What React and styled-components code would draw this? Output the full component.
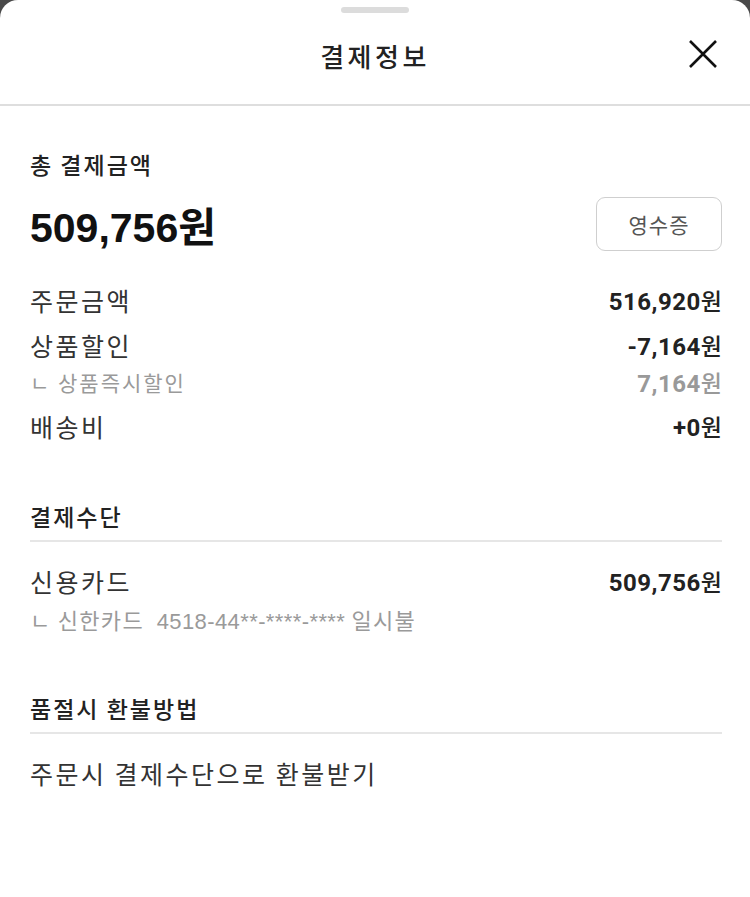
import React from "react";
import styled, { createGlobalStyle } from "styled-components";

const GlobalStyle = createGlobalStyle`
  html, body {
    margin: 0;
    padding: 0;
    background: #4a4a4a;
    font-family: "Noto Sans CJK KR", "Noto Sans", sans-serif;
  }
`;

const Sheet = styled.div`
  width: 750px;
  min-height: 897px;
  background: #fff;
  border-radius: 18px 18px 0 0;
  box-sizing: border-box;
`;

const Handle = styled.div`
  display: flex;
  justify-content: center;
  padding-top: 7px;

  &::before {
    content: "";
    width: 68px;
    height: 6px;
    border-radius: 3px;
    background: #dcdcdc;
  }
`;

const Header = styled.header`
  position: relative;
  height: 93px;
  padding-bottom: 6px;
  box-sizing: border-box;
  display: flex;
  align-items: center;
  justify-content: center;
  border-bottom: 2px solid #dedede;
`;

const Title = styled.h1`
  margin: 0;
  font-size: 26px;
  font-weight: 500;
  color: #222;
  letter-spacing: 3.5px;
`;

const CloseButton = styled.button`
  position: absolute;
  right: 31px;
  top: 25px;
  width: 32px;
  height: 32px;
  padding: 0;
  border: 0;
  background: none;
  display: flex;
  align-items: center;
  justify-content: center;
`;

const Body = styled.main`
  padding: 43px 28px 0 30px;
`;

const Caption = styled.div`
  font-size: 23px;
  font-weight: 500;
  color: #222;
  line-height: 30px;
  letter-spacing: 2px;
`;

const TotalRow = styled.div`
  display: flex;
  align-items: center;
  justify-content: space-between;
  margin-top: 15px;
`;

const Total = styled.div`
  font-family: "Liberation Sans", "Noto Sans CJK KR", sans-serif;
  font-size: 41px;
  font-weight: 700;
  color: #111;
`;

const ReceiptButton = styled.button`
  width: 126px;
  height: 54px;
  border: 1.5px solid #cfcfcf;
  border-radius: 9px;
  background: #fff;
  font-family: "Noto Sans CJK KR", sans-serif;
  font-size: 21px;
  color: #555;
  letter-spacing: 1px;
`;

const Rows = styled.div`
  margin-top: 23px;
`;

const Row = styled.div`
  display: flex;
  justify-content: space-between;
  align-items: center;
  height: ${(p) => (p.$sub ? 36 : 45)}px;
  margin: ${(p) => (p.$sub ? "-3px 0 3px" : "0")};
  color: ${(p) => (p.$sub ? "#9a9a9a" : "#333")};
`;

const Label = styled.span`
  font-size: ${(p) => (p.$sub ? 21 : 25)}px;
  letter-spacing: ${(p) => (p.$sub ? 2 : 2.5)}px;
`;

const Value = styled.span`
  font-family: "Roboto", "Noto Sans CJK KR", sans-serif;
  font-size: 24px;
  font-weight: 700;
  letter-spacing: 0.5px;
  color: ${(p) => (p.$sub ? "#999" : "#222")};

  small {
    font-family: "Noto Sans CJK KR", sans-serif;
    font-size: 23px;
    font-weight: 500;
    letter-spacing: 0;
  }
`;

const Section = styled.section`
  margin-top: ${(p) => p.$gap}px;
`;

const SectionTitle = styled.h2`
  margin: 0;
  font-size: 23px;
  font-weight: 500;
  color: #222;
  line-height: 30px;
  letter-spacing: 2px;
  padding-bottom: 9px;
  border-bottom: 2px solid #e6e6e6;
`;

const SectionBody = styled.div`
  padding-top: ${(p) => p.$pad}px;
`;

const SubNote = styled.div`
  font-size: 22px;
  color: #9a9a9a;
  letter-spacing: 1.3px;

  span {
    font-family: "Liberation Sans", sans-serif;
    letter-spacing: 0.4px;
  }
`;

const Plain = styled.div`
  font-size: 25px;
  color: #333;
  letter-spacing: 2.5px;
`;

const Won = ({ children, sub }) => (
  <Value $sub={sub}>
    {children}
    <small>원</small>
  </Value>
);

export default function App() {
  return (
    <>
      <GlobalStyle />
      <Sheet>
        <Handle />
        <Header>
          <Title>결제정보</Title>
          <CloseButton aria-label="닫기">
            <svg width="32" height="32" viewBox="0 0 32 32">
              <path d="M3 3 L29 29 M29 3 L3 29" stroke="#111" strokeWidth="2.6" fill="none" />
            </svg>
          </CloseButton>
        </Header>

        <Body>
          <Caption>총 결제금액</Caption>
          <TotalRow>
            <Total>509,756원</Total>
            <ReceiptButton>영수증</ReceiptButton>
          </TotalRow>

          <Rows>
            <Row>
              <Label>주문금액</Label>
              <Won>516,920</Won>
            </Row>
            <Row>
              <Label>상품할인</Label>
              <Won>-7,164</Won>
            </Row>
            <Row $sub>
              <Label $sub>ㄴ 상품즉시할인</Label>
              <Won sub>7,164</Won>
            </Row>
            <Row>
              <Label>배송비</Label>
              <Won>+0</Won>
            </Row>
          </Rows>

          <Section $gap={53}>
            <SectionTitle>결제수단</SectionTitle>
            <SectionBody $pad={16}>
              <Row>
                <Label>신용카드</Label>
                <Won>509,756</Won>
              </Row>
              <SubNote>
                ㄴ 신한카드 <span>&nbsp;4518-44**-****-****</span> 일시불
              </SubNote>
            </SectionBody>
          </Section>

          <Section $gap={58}>
            <SectionTitle>품절시 환불방법</SectionTitle>
            <SectionBody $pad={21}>
              <Plain>주문시 결제수단으로 환불받기</Plain>
            </SectionBody>
          </Section>
        </Body>
      </Sheet>
    </>
  );
}
